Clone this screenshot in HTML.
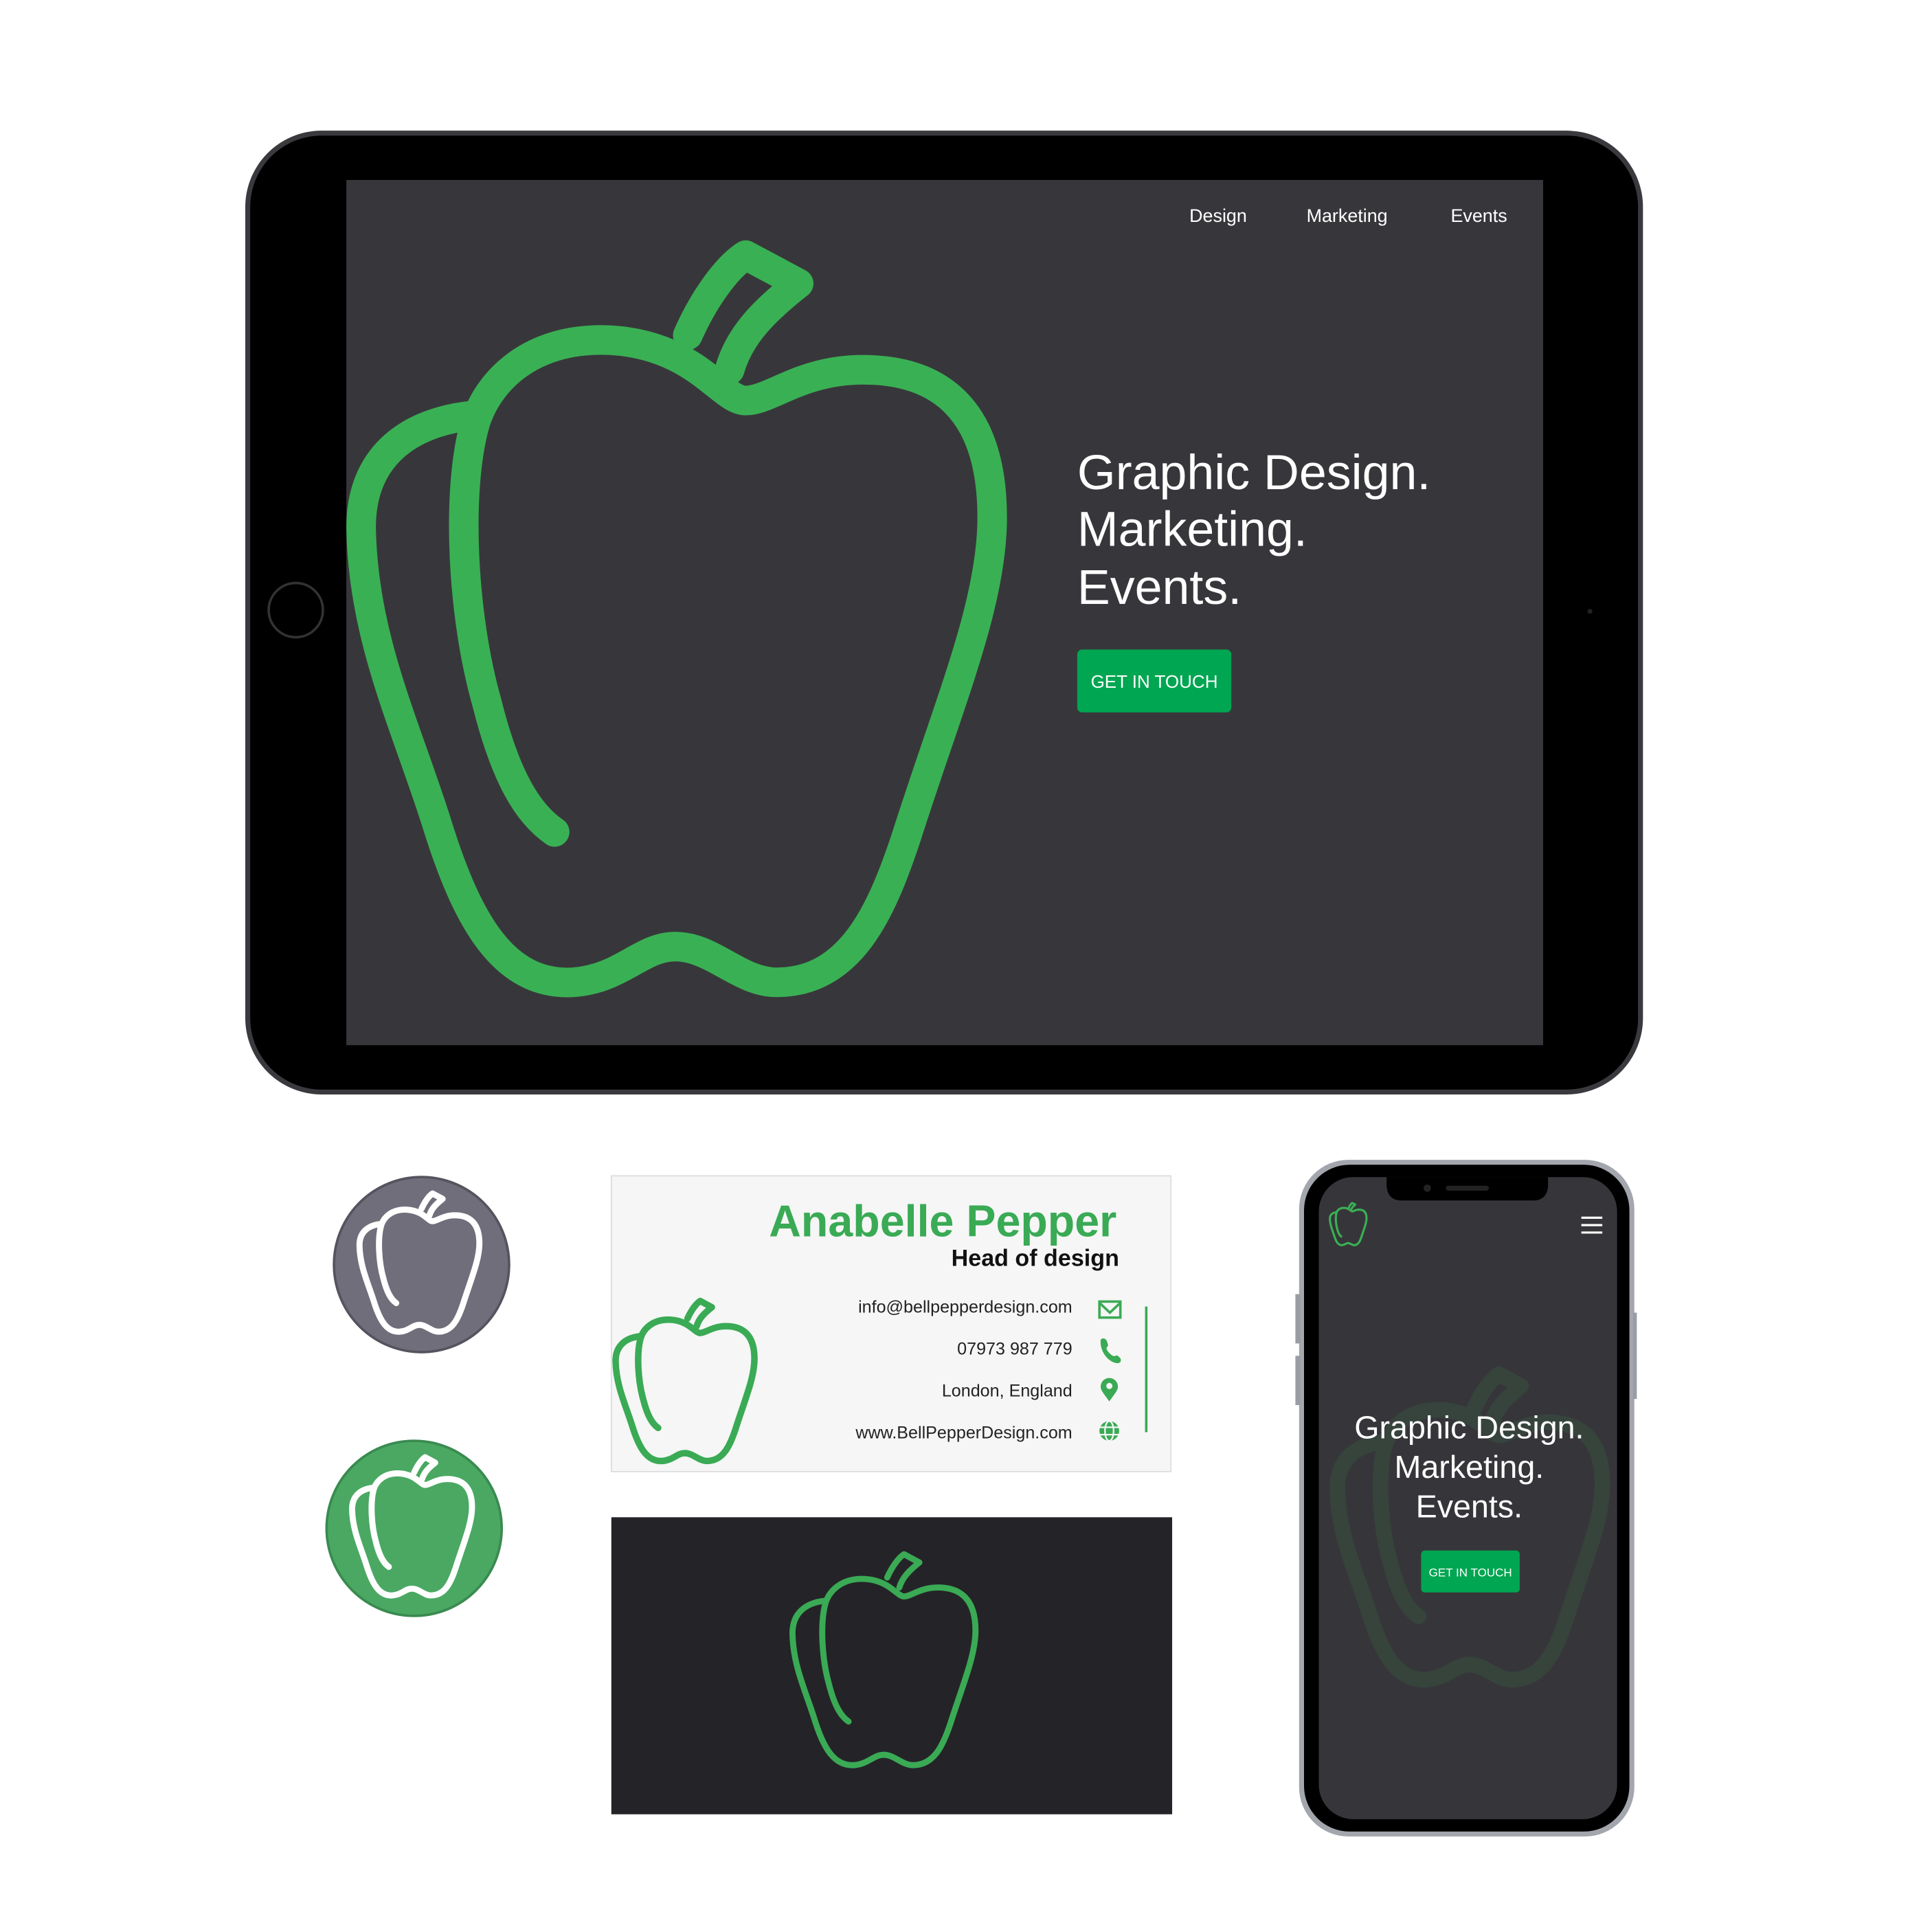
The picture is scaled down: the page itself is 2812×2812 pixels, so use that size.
<!DOCTYPE html>
<html><head><meta charset="utf-8"><style>html,body{margin:0;padding:0;background:#fff}svg{display:block}text{font-family:"Liberation Sans",sans-serif}</style></head>
<body>
<svg width="2812" height="2812" viewBox="0 0 1567.5 1567.5" xmlns="http://www.w3.org/2000/svg">
<defs>
<g id="pep" fill="none" stroke-linecap="round" stroke-linejoin="round">
<path d="M385,337 C330,342 292,372 293,430 C295,520 330,590 355,670 C380,750 410,800 465,797 C505,794 520,768 548,768 C578,768 600,797 630,797 C690,797 715,740 735,680 C770,570 805,490 805,420 C805,330 760,300 700,300 C650,300 625,325 605,325 C585,325 565,280 495,276 C430,273 395,310 385,345 C370,400 375,500 395,570 C410,630 428,660 450,675"/>
<path d="M558,272 C570,245 588,218 605,207 L648,230 C620,252 600,272 592,300"/>
</g>
</defs>
<rect width="1567.5" height="1567.5" fill="#fff"/>
<!-- iPad -->
<rect x="199" y="106" width="1134" height="782" rx="62" fill="#3a3a3e"/>
<rect x="203" y="110" width="1126" height="774" rx="58" fill="#000"/>
<rect x="281" y="146" width="971" height="702" fill="#37373b"/>
<circle cx="240" cy="495" r="22" fill="#000" stroke="#333" stroke-width="2"/>
<circle cx="1290" cy="496" r="2" fill="#222"/>
<svg x="281" y="146" width="971" height="702" viewBox="281 146 971 702">
<use href="#pep" stroke="#3ab054" stroke-width="24"/>
</svg>
<text x="965" y="180" font-size="15" fill="#fff">Design</text>
<text x="1060" y="180" font-size="15" fill="#fff">Marketing</text>
<text x="1177" y="180" font-size="15" fill="#fff">Events</text>
<text font-size="40" fill="#fff"><tspan x="874" y="397">Graphic Design.</tspan><tspan x="874" y="443">Marketing.</tspan><tspan x="874" y="490">Events.</tspan></text>
<rect x="874" y="527" width="125" height="51" rx="4" fill="#00a651"/>
<text x="936.5" y="558" font-size="14.5" fill="#fff" text-anchor="middle">GET IN TOUCH</text>
<!-- badges -->
<circle cx="342" cy="1026" r="72" fill="#6f6e7a"/>
<circle cx="342" cy="1026" r="71" fill="none" stroke="#55545e" stroke-width="2"/>
<g transform="translate(236,929) scale(0.19)"><use href="#pep" stroke="#fff" stroke-width="26"/></g>
<circle cx="336" cy="1240" r="72" fill="#4aa862"/>
<circle cx="336" cy="1240" r="71" fill="none" stroke="#3a8a50" stroke-width="2"/>
<g transform="translate(230,1143) scale(0.19)"><use href="#pep" stroke="#fff" stroke-width="26"/></g>
<!-- business card -->
<rect x="496" y="954" width="454" height="240" fill="#f5f6f5" stroke="#ddd" stroke-width="1"/>
<svg x="496" y="954" width="454" height="240" viewBox="496 954 454 240">
<g transform="translate(435,1010) scale(0.22)"><use href="#pep" stroke="#3aaa55" stroke-width="24"/></g>
</svg>
<text x="906" y="1003" font-size="36" font-weight="bold" fill="#3aaa55" text-anchor="end">Anabelle Pepper</text>
<text x="908" y="1027" font-size="19" font-weight="bold" fill="#111" text-anchor="end">Head of design</text>
<g font-size="14" fill="#222" text-anchor="end">
<text x="870" y="1065">info@bellpepperdesign.com</text>
<text x="870" y="1099">07973 987 779</text>
<text x="870" y="1133">London, England</text>
<text x="870" y="1167">www.BellPepperDesign.com</text>
</g>
<g stroke="#3aaa55" fill="none" stroke-width="2">
<rect x="892" y="1056" width="17" height="13"/><path d="M892,1057 L900.5,1065 L909,1057"/>
<line x1="930" y1="1060" x2="930" y2="1162"/>
</g>
<path d="M893,1087 c2,-2 4,-1 5,1 l1,3 c0,2 -2,2 -1,4 c1,2 3,4 5,5 c2,1 2,-1 4,0 l2,2 c1,2 0,4 -2,4 c-7,0 -15,-9 -14,-19z" fill="#3aaa55"/>
<path d="M900,1137 c-5,-7 -7,-9 -7,-12 a7,7 0 0 1 14,0 c0,3 -2,5 -7,12z M900,1122 a2.5,2.5 0 1 0 0.1,0z" fill="#3aaa55" fill-rule="evenodd"/>
<circle cx="900" cy="1161" r="8" fill="#3aaa55"/>
<g stroke="#f5f6f5" stroke-width="1.3" fill="none"><ellipse cx="900" cy="1161" rx="3.5" ry="8"/><line x1="892" y1="1158" x2="908" y2="1158"/><line x1="892" y1="1164" x2="908" y2="1164"/></g>
<!-- dark card -->
<rect x="496" y="1231" width="455" height="241" fill="#242428"/>
<g transform="translate(558,1201) scale(0.29)"><use href="#pep" stroke="#3aaa55" stroke-width="17"/></g>
<!-- phone -->
<rect x="1054" y="941" width="272" height="549" rx="40" fill="#a4a6ae"/>
<rect x="1058" y="945" width="264" height="541" rx="37" fill="#000"/>
<rect x="1070" y="955" width="242" height="521" rx="28" fill="#36363a"/>
<rect x="1051" y="1050" width="4" height="40" fill="#9a9ca4"/><rect x="1051" y="1100" width="4" height="40" fill="#9a9ca4"/>
<rect x="1325" y="1065" width="3" height="70" fill="#9a9ca4"/>
<path d="M1125,955 h131 v6 c0,8 -4,13 -12,13 h-107 c-8,0 -12,-5 -12,-13z" fill="#000"/>
<circle cx="1158" cy="964" r="3" fill="#222"/><rect x="1173" y="962" width="35" height="4" rx="2" fill="#222"/>
<svg x="1070" y="955" width="242" height="521" viewBox="1070 955 242 521">
<g transform="translate(962,1028) scale(0.42)" opacity="0.12"><use href="#pep" stroke="#3aaa55" stroke-width="30"/></g>
</svg>
<g transform="translate(1062,964) scale(0.058)"><use href="#pep" stroke="#3ab054" stroke-width="30"/></g>
<g stroke="#fff" stroke-width="1.8"><line x1="1283" y1="988" x2="1300" y2="988"/><line x1="1283" y1="994" x2="1300" y2="994"/><line x1="1283" y1="1000" x2="1300" y2="1000"/></g>
<text font-size="26" fill="#fff" text-anchor="middle"><tspan x="1192" y="1167">Graphic Design.</tspan><tspan x="1192" y="1199">Marketing.</tspan><tspan x="1192" y="1231">Events.</tspan></text>
<rect x="1153" y="1258" width="80" height="34" rx="3" fill="#00a651"/>
<text x="1193" y="1279" font-size="9.5" fill="#fff" text-anchor="middle">GET IN TOUCH</text>
</svg>
</body></html>
